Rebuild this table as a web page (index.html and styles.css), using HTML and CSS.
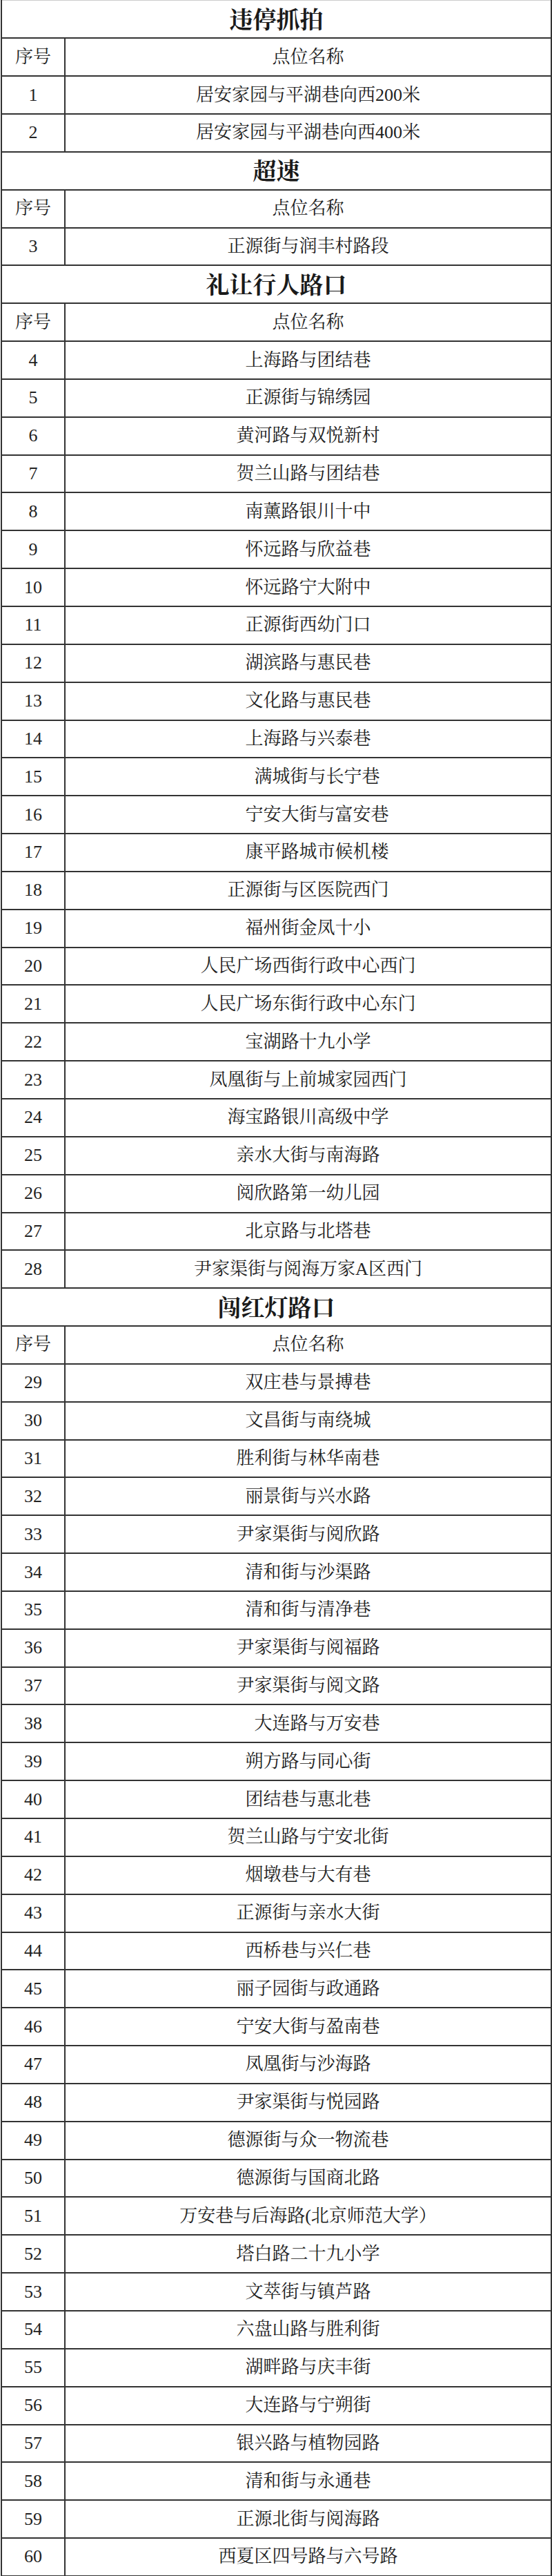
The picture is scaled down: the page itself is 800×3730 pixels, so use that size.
FILE: index.html
```html
<!DOCTYPE html>
<html lang="zh-CN">
<head>
<meta charset="utf-8">
<title>点位</title>
<link rel="stylesheet" href="styles.css">
</head>
<body>
<table class="sheet">
<colgroup><col class="c-no"><col class="c-name"></colgroup>
<tbody>
<tr class="title"><td colspan="2">违停抓拍</td></tr>
<tr class="head"><td>序号</td><td>点位名称</td></tr>
<tr><td>1</td><td>居安家园与平湖巷向西200米</td></tr>
<tr><td>2</td><td>居安家园与平湖巷向西400米</td></tr>
<tr class="title"><td colspan="2">超速</td></tr>
<tr class="head"><td>序号</td><td>点位名称</td></tr>
<tr><td>3</td><td>正源街与润丰村路段</td></tr>
<tr class="title"><td colspan="2">礼让行人路口</td></tr>
<tr class="head"><td>序号</td><td>点位名称</td></tr>
<tr><td>4</td><td>上海路与团结巷</td></tr>
<tr><td>5</td><td>正源街与锦绣园</td></tr>
<tr><td>6</td><td>黄河路与双悦新村</td></tr>
<tr><td>7</td><td>贺兰山路与团结巷</td></tr>
<tr><td>8</td><td>南薰路银川十中</td></tr>
<tr><td>9</td><td>怀远路与欣益巷</td></tr>
<tr><td>10</td><td>怀远路宁大附中</td></tr>
<tr><td>11</td><td>正源街西幼门口</td></tr>
<tr><td>12</td><td>湖滨路与惠民巷</td></tr>
<tr><td>13</td><td>文化路与惠民巷</td></tr>
<tr><td>14</td><td>上海路与兴泰巷</td></tr>
<tr><td>15</td><td>　满城街与长宁巷</td></tr>
<tr><td>16</td><td>　宁安大街与富安巷</td></tr>
<tr><td>17</td><td>　康平路城市候机楼</td></tr>
<tr><td>18</td><td>正源街与区医院西门</td></tr>
<tr><td>19</td><td>福州街金凤十小</td></tr>
<tr><td>20</td><td>人民广场西街行政中心西门</td></tr>
<tr><td>21</td><td>人民广场东街行政中心东门</td></tr>
<tr><td>22</td><td>宝湖路十九小学</td></tr>
<tr><td>23</td><td>凤凰街与上前城家园西门</td></tr>
<tr><td>24</td><td>海宝路银川高级中学</td></tr>
<tr><td>25</td><td>亲水大街与南海路</td></tr>
<tr><td>26</td><td>阅欣路第一幼儿园</td></tr>
<tr><td>27</td><td>北京路与北塔巷</td></tr>
<tr><td>28</td><td>尹家渠街与阅海万家A区西门</td></tr>
<tr class="title"><td colspan="2">闯红灯路口</td></tr>
<tr class="head"><td>序号</td><td>点位名称</td></tr>
<tr><td>29</td><td>双庄巷与景搏巷</td></tr>
<tr><td>30</td><td>文昌街与南绕城</td></tr>
<tr><td>31</td><td>胜利街与林华南巷</td></tr>
<tr><td>32</td><td>丽景街与兴水路</td></tr>
<tr><td>33</td><td>尹家渠街与阅欣路</td></tr>
<tr><td>34</td><td>清和街与沙渠路</td></tr>
<tr><td>35</td><td>清和街与清净巷</td></tr>
<tr><td>36</td><td>尹家渠街与阅福路</td></tr>
<tr><td>37</td><td>尹家渠街与阅文路</td></tr>
<tr><td>38</td><td>　大连路与万安巷</td></tr>
<tr><td>39</td><td>朔方路与同心街</td></tr>
<tr><td>40</td><td>团结巷与惠北巷</td></tr>
<tr><td>41</td><td>贺兰山路与宁安北街</td></tr>
<tr><td>42</td><td>烟墩巷与大有巷</td></tr>
<tr><td>43</td><td>正源街与亲水大街</td></tr>
<tr><td>44</td><td>西桥巷与兴仁巷</td></tr>
<tr><td>45</td><td>丽子园街与政通路</td></tr>
<tr><td>46</td><td>宁安大街与盈南巷</td></tr>
<tr><td>47</td><td>凤凰街与沙海路</td></tr>
<tr><td>48</td><td>尹家渠街与悦园路</td></tr>
<tr><td>49</td><td>德源街与众一物流巷</td></tr>
<tr><td>50</td><td>德源街与国商北路</td></tr>
<tr><td>51</td><td>万安巷与后海路(北京师范大学）</td></tr>
<tr><td>52</td><td>塔白路二十九小学</td></tr>
<tr><td>53</td><td>文萃街与镇芦路</td></tr>
<tr><td>54</td><td>六盘山路与胜利街</td></tr>
<tr><td>55</td><td>湖畔路与庆丰街</td></tr>
<tr><td>56</td><td>大连路与宁朔街</td></tr>
<tr><td>57</td><td>银兴路与植物园路</td></tr>
<tr><td>58</td><td>清和街与永通巷</td></tr>
<tr><td>59</td><td>正源北街与阅海路</td></tr>
<tr><td>60</td><td>西夏区四号路与六号路</td></tr>
</tbody>
</table>
</body>
</html>
```
FILE: styles.css
```css
html, body {
  margin: 0;
  padding: 0;
  background: #ffffff;
}

.sheet {
  width: 799px;
  margin: 0 0 0 1px;
  border-collapse: collapse;
  table-layout: fixed;
  font-family: "Liberation Serif", "Noto Serif CJK SC", "Noto Sans CJK SC", serif;
  color: #222222;
}

.c-no {
  width: 92px;
}

.sheet tr {
  height: 54.85px;
}

.sheet td {
  border: 2px solid #333333;
  padding: 0;
  text-align: center;
  vertical-align: middle;
  font-size: 26px;
  line-height: 30px;
  white-space: nowrap;
}

.sheet tr.title td {
  font-size: 34px;
  font-weight: 700;
  color: #1a1a1a;
  padding-top: 4px;
}

.sheet tr:first-child td {
  border-top: 1px solid #cccccc;
}
```
